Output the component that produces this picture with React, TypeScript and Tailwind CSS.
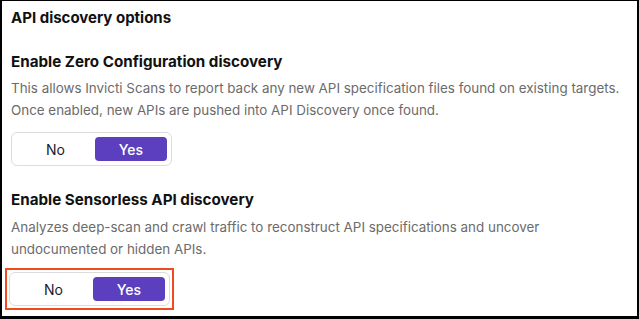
import React from 'react';

function YesNo() {
  return (
    <div className="flex h-[34px] w-[161px] items-center rounded-md border border-[#dcdcdc] bg-white p-1">
      <span className="flex h-full flex-1 items-center justify-center text-[14px] text-[#1a1a2e]">No</span>
      <span className="flex h-[24px] w-[72px] items-center justify-center rounded-[4px] bg-[#5b3fbf] text-[14px] font-medium text-white">
        Yes
      </span>
    </div>
  );
}

export default function App() {
  return (
    <div
      className="h-[319px] w-[639px] overflow-hidden border-t border-r-2 border-b-[3px] border-l-2 border-black bg-white pl-[9px] text-[#111]"
      style={{ fontFamily: 'Inter, "Liberation Sans", sans-serif' }}
    >
      <h1 className="mt-[8px] text-[15px] font-bold leading-[18px]">API discovery options</h1>

      {/* Zero configuration */}
      <h2 className="mt-[26px] text-[15.2px] font-bold leading-[18px]">Enable Zero Configuration discovery</h2>
      <p className="mt-[6px] text-[13.4px] leading-[22px] text-[#6b6b6b]">
        This allows Invicti Scans to report back any new API specification files found on existing targets.
        <br />
        Once enabled, new APIs are pushed into API Discovery once found.
      </p>
      <div className="mt-[11px]">
        <YesNo />
      </div>

      {/* Sensorless */}
      <h2 className="mt-[25px] text-[15.2px] font-bold leading-[18px]">Enable Sensorless API discovery</h2>
      <p className="mt-[7px] text-[13.4px] leading-[22px] text-[#6b6b6b]">
        Analyzes deep-scan and crawl traffic to reconstruct API specifications and uncover
        <br />
        undocumented or hidden APIs.
      </p>
      <div className="-ml-[6px] mt-[8px] w-fit border-2 border-[#f04a1f] p-[2px]">
        <YesNo />
      </div>
    </div>
  );
}
